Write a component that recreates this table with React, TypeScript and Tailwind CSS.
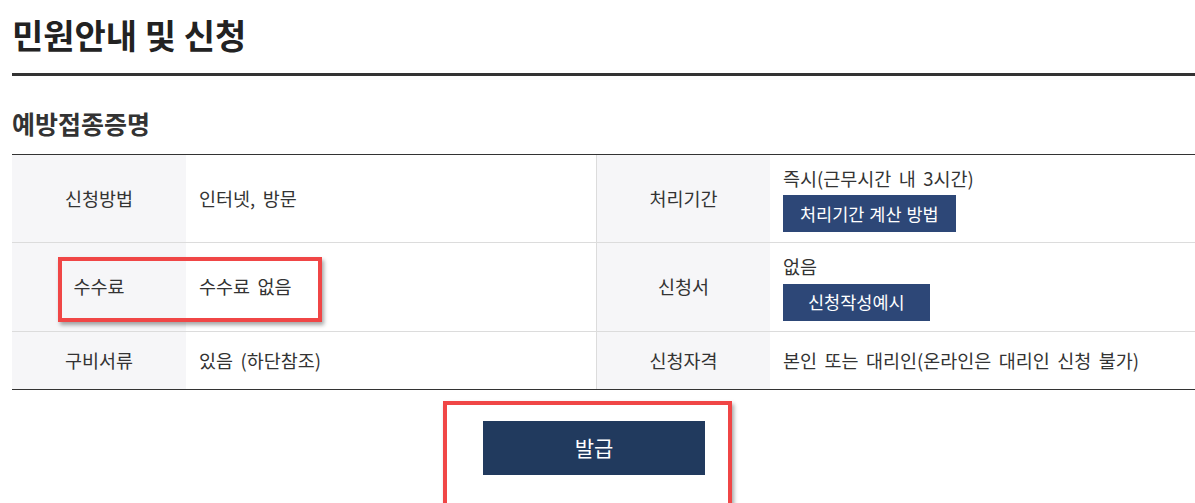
const font = {
  fontFamily: '"Noto Sans CJK KR", "Noto Sans", sans-serif',
};

function Label({ children }: { children: React.ReactNode }) {
  return (
    <div className="flex flex-1 items-center justify-center bg-[#f6f6f8] text-[18.5px] text-[#333] [word-spacing:3px]">
      {children}
    </div>
  );
}

function Value({ children }: { children: React.ReactNode }) {
  return (
    <div className="flex flex-col justify-center px-[13px] text-[18.5px] text-[#333] [word-spacing:3.3px]">
      {children}
    </div>
  );
}

function SmallBtn({ children, wide }: { children: React.ReactNode; wide?: boolean }) {
  return (
    <span
      className={
        "mt-[3px] inline-flex h-[37px] w-fit items-center bg-[#2d4777] text-[17.5px] text-white [word-spacing:1px] " +
        (wide ? "px-[25px]" : "px-[17px]")
      }
    >
      {children}
    </span>
  );
}

export default function App() {
  return (
    <div className="relative h-[503px] w-[1195px] overflow-hidden bg-white pl-3" style={font}>
      <h1 className="pt-[13px] text-[34px] font-bold leading-[44px] text-[#222]">
        민원안내 및 신청
      </h1>
      <div className="mt-[16px] h-[3px] bg-[#333]" />

      <h2 className="mt-[30px] text-[25px] font-semibold leading-[34px] text-[#333]">
        예방접종증명
      </h2>

      <div className="mt-[14px] border-t border-b border-[#333]">
        <div className="grid h-[88px] grid-cols-[174px_410px_174px_1fr] border-b border-[#dcdcdc]">
          <Label>신청방법</Label>
          <Value>인터넷, 방문</Value>
          <div className="flex border-l border-[#dcdcdc]">
            <Label>처리기간</Label>
          </div>
          <Value>
            <span>즉시(근무시간 내 3시간)</span>
            <SmallBtn>처리기간 계산 방법</SmallBtn>
          </Value>
        </div>
        <div className="grid h-[89px] grid-cols-[174px_410px_174px_1fr] border-b border-[#dcdcdc]">
          <Label>수수료</Label>
          <Value>수수료 없음</Value>
          <div className="flex border-l border-[#dcdcdc]">
            <Label>신청서</Label>
          </div>
          <Value>
            <span>없음</span>
            <SmallBtn wide>신청작성예시</SmallBtn>
          </Value>
        </div>
        <div className="grid h-[57px] grid-cols-[174px_410px_174px_1fr]">
          <Label>구비서류</Label>
          <Value>있음 (하단참조)</Value>
          <div className="flex border-l border-[#dcdcdc]">
            <Label>신청자격</Label>
          </div>
          <Value>본인 또는 대리인(온라인은 대리인 신청 불가)</Value>
        </div>
      </div>

      <div className="flex justify-center pt-[31px] pr-[19px]">
        <button className="h-[54px] w-[222px] bg-[#213a5e] text-[21px] text-white">발급</button>
      </div>

      {/* annotation boxes */}
      <div className="absolute left-[58px] top-[257px] h-[65px] w-[264px] border-[4px] border-[#f04646] shadow-[2px_3px_4px_rgba(0,0,0,0.35)]" />
      <div className="absolute left-[443px] top-[401px] h-[110px] w-[289px] border-[4px] border-[#f04646] shadow-[2px_3px_4px_rgba(0,0,0,0.35)]" />
    </div>
  );
}
